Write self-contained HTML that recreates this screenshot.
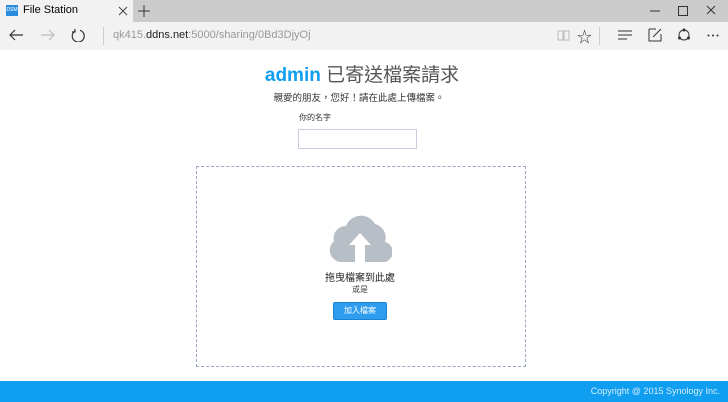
<!DOCTYPE html><html><head><meta charset="utf-8"><style>
body{margin:0;width:728px;height:402px;position:relative;overflow:hidden;font-family:"Liberation Sans","Noto Sans CJK TC",sans-serif;background:#fff}
.a{position:absolute}
</style></head><body>
<div class="a" style="left:0;top:0;width:728px;height:22px;background:#ccc"></div>
<div class="a" style="left:0;top:0;width:133px;height:22px;background:#f2f2f2"></div>
<div class="a" style="left:6px;top:5px;width:12px;height:11px;background:#2a8de0;color:#fff;font-size:5px;line-height:11px;text-align:center">DSM</div>
<div class="a" style="left:23px;top:4px;font-size:11px;color:#000">File Station</div>
<svg class="a" style="left:118px;top:6px" width="10" height="10"><path d="M1 1L9 9M9 1L1 9" stroke="#444" stroke-width="1"/></svg>
<svg class="a" style="left:138px;top:5px" width="12" height="12"><path d="M6 0V12M0 6H12" stroke="#333" stroke-width="1"/></svg>
<svg class="a" style="left:650px;top:10px" width="10" height="2"><path d="M0 1H10" stroke="#333"/></svg>
<div class="a" style="left:678px;top:6px;width:8px;height:8px;border:1px solid #333"></div>
<svg class="a" style="left:706px;top:5px" width="10" height="10"><path d="M1 1L9 9M9 1L1 9" stroke="#333" stroke-width="1"/></svg>
<div class="a" style="left:0;top:22px;width:728px;height:28px;background:#f2f2f2"></div>
<svg class="a" style="left:9px;top:29px" width="15" height="12"><path d="M14 6H1M6 1L1 6L6 11" stroke="#333" fill="none" stroke-width="1.2"/></svg>
<svg class="a" style="left:40px;top:29px" width="15" height="12"><path d="M1 6H14M9 1L14 6L9 11" stroke="#bbb" fill="none" stroke-width="1.2"/></svg>
<svg class="a" style="left:71px;top:28px" width="14" height="14"><path d="M4 3A6 6 0 1 0 9 2.3M4 1V4H1" stroke="#333" fill="none" stroke-width="1.2"/></svg>
<div class="a" style="left:103px;top:27px;width:1px;height:18px;background:#ccc"></div>
<div class="a" style="left:113px;top:29px;font-size:11px;color:#999">qk415.<span style="color:#222">ddns.net</span>:5000/sharing/0Bd3DjyOj</div>
<svg class="a" style="left:557px;top:30px" width="13" height="11"><path d="M1 1H6V10H1ZM7 1H12V10H7Z" stroke="#bbb" fill="none"/></svg>
<div class="a" style="left:577px;top:26px;font-size:15px;color:#333">☆</div>
<div class="a" style="left:599px;top:27px;width:1px;height:18px;background:#ccc"></div>
<svg class="a" style="left:618px;top:30px" width="14" height="10"><path d="M0 1H14M0 5H14M0 9H9" stroke="#333"/></svg>
<svg class="a" style="left:648px;top:28px" width="14" height="14"><path d="M1 1H8M1 1V13H13V6M5 9L13 1" stroke="#333" fill="none"/></svg>
<svg class="a" style="left:677px;top:28px" width="14" height="14"><circle cx="7" cy="7" r="5" stroke="#333" fill="none"/><circle cx="7" cy="2" r="1.5" fill="#333"/><circle cx="2.5" cy="10" r="1.5" fill="#333"/><circle cx="11.5" cy="10" r="1.5" fill="#333"/></svg>
<svg class="a" style="left:707px;top:34px" width="12" height="3"><circle cx="1.5" cy="1.5" r="1" fill="#333"/><circle cx="6" cy="1.5" r="1" fill="#333"/><circle cx="10.5" cy="1.5" r="1" fill="#333"/></svg>
<div class="a" style="left:0;top:60px;width:724px;text-align:center;font-size:19px;color:#555"><b style="color:#0f9ef0">admin</b> 已寄送檔案請求</div>
<div class="a" style="left:0;top:90px;width:718px;text-align:center;font-size:9.5px;color:#333">親愛的朋友，您好！請在此處上傳檔案。</div>
<div class="a" style="left:299px;top:112px;font-size:8px;color:#333">你的名字</div>
<div class="a" style="left:298px;top:129px;width:117px;height:18px;border:1px solid #ccd;"></div>
<div class="a" style="left:196px;top:166px;width:328px;height:199px;border:1px dashed #99a8c0"></div>
<svg class="a" style="left:328px;top:212px" width="64" height="50" viewBox="0 0 64 50"><path d="M12 50 A12 12 0 0 1 6 29 A12 12 0 0 1 18 14 A16 16 0 0 1 47 12 A14 14 0 0 1 57 30 A10 10 0 0 1 52 50Z" fill="#b8bec5"/><path d="M32 21 L43 33 L37 33 L37 50 L27 50 L27 33 L21 33Z" fill="#fff"/></svg>
<div class="a" style="left:0;top:269px;width:720px;text-align:center;font-size:10px;color:#222">拖曳檔案到此處</div>
<div class="a" style="left:0;top:284px;width:720px;text-align:center;font-size:8px;color:#444">或是</div>
<div class="a" style="left:333px;top:302px;width:54px;height:18px;background:#2e9df0;border:1px solid #1a82d0;box-sizing:border-box;border-radius:2px;color:#fff;font-size:8px;line-height:16px;text-align:center">加入檔案</div>
<div class="a" style="left:0;top:381px;width:728px;height:21px;background:#0f9ef0"></div>
<div class="a" style="right:8px;top:386px;font-size:9px;color:#d8eeff">Copyright @ 2015 Synology Inc.</div>
</body></html>
